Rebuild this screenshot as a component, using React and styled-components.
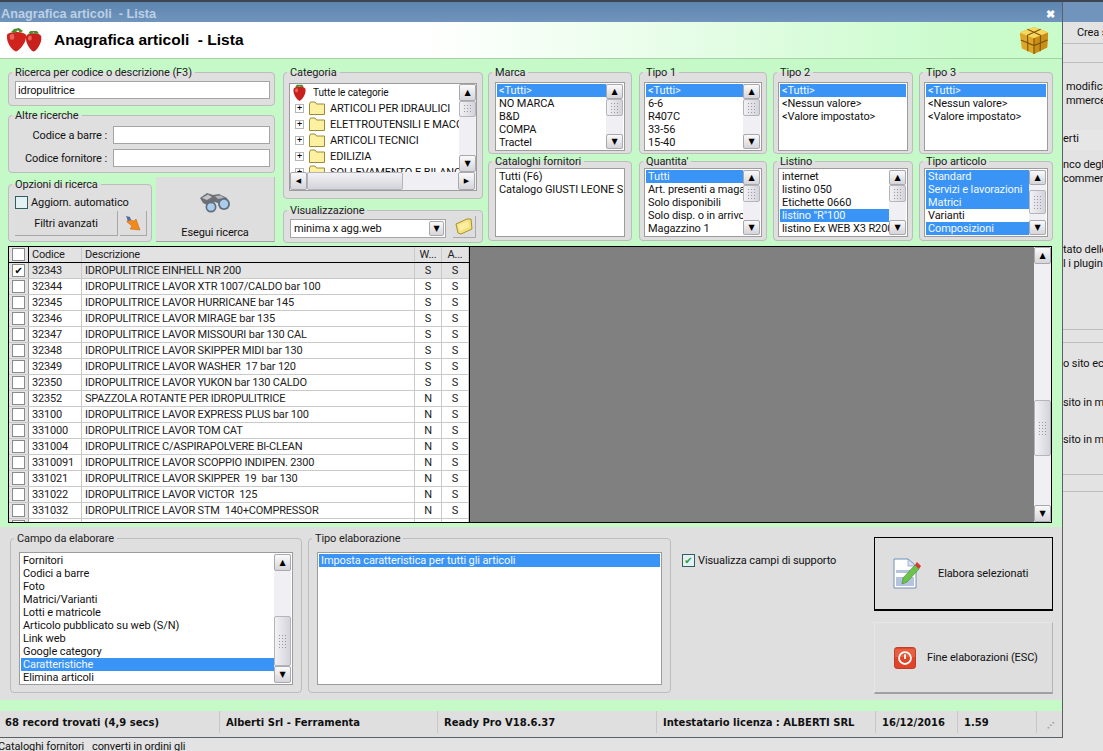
import React from "react";
import styled, { createGlobalStyle } from "styled-components";

const GlobalStyle = createGlobalStyle`
  html, body { margin: 0; padding: 0; background: #e3e3e3; overflow: hidden; }
  body { font-family: Roboto, "Liberation Sans", Arial, sans-serif; font-size: 11px; letter-spacing: -0.1px; color: #111; }
`;

const Berry = ({ x = 0, y = 0, s = 1 }) => (
  <g transform={`translate(${x} ${y}) scale(${s})`}>
    <path d="M1 6 C2 2 14 2 15 6 C16 12 11 19 8 20 C5 19 0 12 1 6Z" fill="#c8201c" />
    <path d="M3 6 C5 4 7 5 6 9 C4 11 2 9 3 6Z" fill="#e8655a" />
    <path d="M3 3 L6 4 L8 2 L10 4 L13 3 L11 1 L8 1 L5 1Z" fill="#4f8a2c" />
  </g>
);

const Strawberries = () => (
  <svg width="37" height="24" viewBox="0 0 37 24">
    <Berry x={19} y={2} s={1.08} />
    <path d="M1 7 C2 3 18 3 20 7 C21 14 14 22 10 23.5 C6 22 0 15 1 7Z" fill="#d0231e" />
    <path d="M4 7 C7 5 9 6 8 11 C5 13 3 11 4 7Z" fill="#e8655a" />
    <path d="M5 4 L9 5 L12 2 L14 5 L17 3 L13 0 L8 1Z" fill="#4f8a2c" />
  </svg>
);

const Cube = () => (
  <svg width="30" height="30" viewBox="0 0 32 32">
    <path d="M16 2 L29 7 Q31 8 31 10 L30 24 L16 31 L3 25 L1 10 Q1 8 3 7Z" fill="#dfa726" />
    <path d="M16 2 L29 7 Q31 8 29 9 L16 14 L3 9 Q1 8 3 7Z" fill="#f7d85e" />
    <path d="M16 14 L31 8 L30 24 L16 31Z" fill="#c98e16" />
    <path d="M9 4.5 L23 11 M23 4.5 L9 11 M9 11 L9.5 28 M23 11 L22.5 28 M2 16 L16 22 L30.5 16 M16 14 V31" stroke="#7d540a" strokeWidth="1.2" fill="none" />
  </svg>
);

const Binoculars = () => (
  <svg width="32" height="21" viewBox="0 0 32 21">
    <path d="M1 6 L8 1 L14 3 L20 2 L28 6 L30 11 L24 13 L16 10 L10 14 L4 11Z" fill="#6f7075" />
    <path d="M3 6 L9 2.5 L13 5 L8 8Z" fill="#c2c5ca" />
    <path d="M16 4 L22 3.5 L25 6 L19 7Z" fill="#b4b7bd" />
    <circle cx="12" cy="15" r="5.5" fill="#5f6f80" />
    <circle cx="12" cy="15" r="3.8" fill="#a9cdea" />
    <circle cx="25" cy="12" r="6" fill="#5f6f80" />
    <circle cx="25" cy="12" r="4.2" fill="#a9cdea" />
  </svg>
);

const FolderIcon = () => (
  <Svg width="16" height="14" viewBox="0 0 16 14">
    <path d="M.5 3 L1.5 1 H6 L7.5 3 H15.5 V13.5 H.5Z" fill="#fdf0a0" stroke="#9c8a3a" />
  </Svg>
);

const OpenFolderIcon = () => (
  <Svg width="18" height="17" viewBox="0 0 18 17">
    <path d="M1 6 L12 1 L16 1 L17 11 L6 16 L3 15Z" fill="#f5e27c" stroke="#a78f35" />
    <path d="M3 7 L13 3 L14 9 L5 13Z" fill="#fbeea0" />
  </Svg>
);

const ArrowIcon = () => (
  <svg width="16" height="16" viewBox="0 0 16 16">
    <path d="M3 4 L9 6 L11 4 L15 15 L5 14 L7 11 L2 7Z" fill="#f08a1d" stroke="#c4600c" strokeWidth=".5" />
    <path d="M1 1 L5 2 L6 5 L3 6Z" fill="#4a6fa8" />
  </svg>
);

const EditIcon = () => (
  <svg width="28" height="32" viewBox="0 0 28 32">
    <path d="M1 1 H15 L23 8 V30 H1Z" fill="#fff" stroke="#6f8fb8" />
    <path d="M15 1 V8 H23Z" fill="#d8e2f0" stroke="#6f8fb8" strokeWidth=".6" />
    <path d="M3 12 H21 V15 H3Z M3 19 H21 V28 H3Z" fill="#b5c3de" />
    <path d="M9 26 L10 20 L22 7 L26 11 L14 24Z" fill="#6cc24a" stroke="#3d8a2a" strokeWidth=".6" />
    <path d="M22 7 L24 4 L28 8 L26 11Z" fill="#d9392e" />
  </svg>
);

const PowerIcon = () => (
  <svg width="22" height="22" viewBox="0 0 24 24">
    <rect x=".5" y=".5" width="23" height="23" rx="3" fill="#df4526" stroke="#b8321d" />
    <path d="M1 2 H23 V11 H1Z" fill="#f07a5c" opacity=".5" />
    <circle cx="12" cy="12" r="6.5" fill="none" stroke="#fff" strokeWidth="2" />
    <path d="M12 8 V13" stroke="#fff" strokeWidth="2" />
  </svg>
);

const Svg = styled.svg`
  flex-shrink: 0;
`;

const Page = styled.div`
  width: 1103px;
  height: 751px;
  display: flex;
  flex-direction: column;
  overflow: hidden;
  background: #e3e3e3;
`;

const TopEdge = styled.div`
  height: 2px;
  background: #3d4650;
`;

const Desk = styled.div`
  flex: 1;
  display: flex;
  min-height: 0;
`;

const Window = styled.div`
  width: 1063px;
  height: 736px;
  flex-shrink: 0;
  display: flex;
  flex-direction: column;
  border-right: 1px solid #5b6066;
  border-bottom: 1px solid #5b6066;
  box-sizing: border-box;
`;

const TitleBar = styled.div`
  height: 20px;
  flex-shrink: 0;
  display: flex;
  align-items: center;
  justify-content: space-between;
  padding: 4px 7px 0 1px;
  box-sizing: border-box;
  background: linear-gradient(#5d85b0, #7094bc);
  color: #bcd0e6;
  font-family: "Liberation Sans", Arial, sans-serif;
  font-size: 12.7px;
  font-weight: bold;
  letter-spacing: 0;
  white-space: pre;
`;

const CloseMark = styled.span`
  color: #fff;
  font-size: 11px;
  font-weight: bold;
`;

const Header = styled.div`
  height: 37px;
  flex-shrink: 0;
  display: flex;
  align-items: center;
  justify-content: space-between;
  padding: 0 13px 0 6px;
  box-sizing: border-box;
  background: linear-gradient(90deg, #fff 0%, #fff 40%, #c9fbcb 92%);
  border-bottom: 1px solid #a9cfa9;
`;

const HeaderTitle = styled.h1`
  flex: 1;
  margin: 0 0 0 11px;
  font-family: "Liberation Sans", Arial, sans-serif;
  font-size: 15.5px;
  font-weight: bold;
  letter-spacing: 0;
  color: #000;
  white-space: pre;
`;

const Body = styled.div`
  flex: 1;
  display: flex;
  flex-direction: column;
  min-height: 0;
  background: #c5fac8;
`;

const Filters = styled.div`
  display: flex;
  height: 184px;
  padding: 8px 0 0 8px;
  flex-shrink: 0;
  box-sizing: border-box;
`;

const Column = styled.div`
  width: ${(p) => p.$w}px;
  margin-left: ${(p) => p.$ml || 0}px;
  display: flex;
  flex-direction: column;
  gap: ${(p) => p.$gap ?? 2}px;
  flex-shrink: 0;
`;

const Group = styled.fieldset`
  margin: ${(p) => p.$mt || 0}px 0 0;
  padding: ${(p) => p.$pt || 0}px ${(p) => p.$pr ?? 4}px 0 ${(p) => p.$pl ?? 4}px;
  width: ${(p) => (p.$w ? `${p.$w}px` : "auto")};
  height: ${(p) => p.$h}px;
  box-sizing: border-box;
  min-width: 0;
  background: ${(p) => (p.$bare ? "transparent" : "#dfdfdf")};
  border: 1px solid #bdbdbd;
  border-radius: 4px;
  flex-shrink: 0;

  legend {
    padding: 0 3px;
    margin-left: ${(p) => 3 - (p.$pl ?? 4)}px;
    font-size: 11px;
    line-height: 11px;
    color: #222;
  }
`;

const TextInput = styled.div`
  flex: ${(p) => (p.$w ? "none" : 1)};
  width: ${(p) => (p.$w ? `${p.$w}px` : "auto")};
  height: 18px;
  line-height: 17px;
  padding-left: 2px;
  background: #fff;
  border: 1px solid #a5a5a5;
  box-sizing: border-box;
`;

const LabelRow = styled.div`
  display: flex;
  align-items: center;
  justify-content: flex-end;
  gap: 6px;
  height: 18px;
  margin-bottom: 5px;
`;

const SplitRow = styled.div`
  display: flex;
  gap: ${(p) => p.$gap ?? 4}px;
`;

const CheckLine = styled.label`
  display: flex;
  align-items: center;
  gap: 3px;
  height: 14px;
  margin-bottom: 2px;
  white-space: nowrap;
`;

const Box = styled.span`
  width: 13px;
  height: 13px;
  flex-shrink: 0;
  box-sizing: border-box;
  background: ${(p) => (p.$soft ? "#e4f0f4" : "#fff")};
  border: 1px solid ${(p) => (p.$soft ? "#2f5f5f" : "#8a8a8a")};
  display: inline-flex;
  align-items: center;
  justify-content: center;
  color: ${(p) => (p.$soft ? "#1f9e3a" : "#000")};
  font-family: "DejaVu Sans", sans-serif;
  font-size: 10px;
  line-height: 11px;
  font-weight: bold;
`;

const FlatButton = styled.div`
  height: ${(p) => p.$h || 25}px;
  flex: ${(p) => (p.$w ? "none" : 1)};
  width: ${(p) => (p.$w ? `${p.$w}px` : "auto")};
  box-sizing: border-box;
  display: flex;
  align-items: center;
  justify-content: center;
  background: #dedede;
  border-bottom: 1px solid #a8a8a8;
  border-right: 1px solid #a8a8a8;
`;

const SearchButton = styled.div`
  height: 65px;
  box-sizing: border-box;
  flex: 1;
  display: flex;
  flex-direction: column;
  align-items: center;
  background: #dedede;
  border-bottom: 1px solid #a0a0a0;
  border-right: 1px solid #c0c0c0;
  padding-top: 15px;
  gap: 13px;
`;

const ListBox = styled.div`
  height: ${(p) => p.$h}px;
  box-sizing: border-box;
  background: #fff;
  border: 1px solid #9c9c9c;
  display: flex;
  overflow: hidden;
  padding: 1px;
`;

const Items = styled.div`
  flex: 1;
  min-width: 0;
  overflow: hidden;
`;

const Item = styled.div`
  height: 13px;
  line-height: 13px;
  padding-left: 2px;
  white-space: nowrap;
  overflow: hidden;
  background: ${(p) => (p.$on ? "#3a94f5" : "transparent")};
  color: ${(p) => (p.$on ? "#f2f8ff" : "#111")};
`;

const VBar = styled.div`
  width: 17px;
  height: ${(p) => (p.$h ? `${p.$h}px` : "auto")};
  flex-shrink: 0;
  display: flex;
  flex-direction: column;
  background: #f0f0f4;
`;

const ScrollBtn = styled.div`
  height: ${(p) => p.$h || 17}px;
  flex-shrink: 0;
  box-sizing: border-box;
  background: linear-gradient(#fafafa, #d5d5da);
  border: 1px solid #a8a8ae;
  border-radius: 2px;
  display: flex;
  align-items: center;
  justify-content: center;
  font-family: "DejaVu Sans", sans-serif;
  font-size: 8px;
  color: #000;
`;

const Thumb = styled.div`
  height: ${(p) => p.$h}px;
  margin-top: ${(p) => p.$top || 0}px;
  flex-shrink: 0;
  box-sizing: border-box;
  background: linear-gradient(90deg, #f2f2f5, #d3d3da);
  border: 1px solid #b4b4bb;
  border-radius: 2px;
  display: flex;
  align-items: center;
  justify-content: center;

  &::after {
    content: "";
    width: 9px;
    height: ${(p) => Math.min(p.$h - 6, 15)}px;
    background: radial-gradient(circle, #9a9aa4 0.7px, transparent 0.8px) 0 0 / 3px 3px;
  }
`;

const Spacer = styled.div`
  flex: 1;
`;

const Scroll = ({ thumb = 17, top = 0, btn = 15 }) => (
  <VBar>
    <ScrollBtn $h={btn}>▲</ScrollBtn>
    <Thumb $h={thumb} $top={top} />
    <Spacer />
    <ScrollBtn $h={btn}>▼</ScrollBtn>
  </VBar>
);

const TreeBox = styled.div`
  height: 108px;
  box-sizing: border-box;
  background: #fff;
  border: 1px solid #9c9c9c;
  display: flex;
  flex-wrap: wrap;
  overflow: hidden;
`;

const TreeItems = styled.div`
  width: 169px;
  height: 88px;
  overflow: hidden;
  padding-left: 2px;
  box-sizing: border-box;
`;

const TreeRoot = styled.div`
  height: 16px;
  display: flex;
  align-items: center;
  gap: 6px;
  font-size: 10px;
`;

const TreeRow = styled.div`
  height: 16px;
  display: flex;
  align-items: center;
  gap: 5px;
  margin-left: 3px;
  white-space: nowrap;
`;

const Plus = styled.span`
  width: 9px;
  height: 9px;
  flex-shrink: 0;
  box-sizing: border-box;
  border: 1px solid #b5b5b5;
  display: inline-flex;
  align-items: center;
  justify-content: center;
  font-size: 9px;
  line-height: 7px;
  color: #000;
`;

const HBar = styled.div`
  width: 100%;
  height: 18px;
  display: flex;
  background: #f0f0f4;
  padding-right: 1px;
  box-sizing: border-box;
`;

const HThumb = styled.div`
  width: 96px;
  background: linear-gradient(#f2f2f5, #d3d3da);
  border: 1px solid #b4b4bb;
  border-radius: 2px;
  box-sizing: border-box;
`;

const HBtn = styled(ScrollBtn)`
  width: 17px;
  height: 18px;
  font-size: 7px;
`;

const ComboRow = styled.div`
  display: flex;
  align-items: flex-end;
  gap: 7px;
`;

const Combo = styled.div`
  flex: 1;
  height: 19px;
  box-sizing: border-box;
  background: #fff;
  border: 1px solid #a5a5a5;
  display: flex;
  align-items: center;
  justify-content: space-between;
  padding: 0 1px 0 3px;
`;

const ComboArrow = styled(ScrollBtn)`
  width: 15px;
  height: 15px;
`;

const GridArea = styled.div`
  height: 277px;
  margin: 3px 10px 0 8px;
  display: flex;
  flex-shrink: 0;
  border: 1px solid #000;
  background: #808080;
  box-sizing: border-box;
`;

const Table = styled.div`
  width: 461px;
  flex-shrink: 0;
  background: #fff;
  border-right: 1px solid #000;
  overflow: hidden;
  box-sizing: border-box;
`;

const GridRow = styled.div`
  display: grid;
  grid-template-columns: 20px 53px 333px 27px 27px;
  height: 16px;
  box-sizing: border-box;
  border-bottom: 1px solid ${(p) => (p.$head ? "#000" : "#c9c9c9")};
  background: ${(p) => (p.$head ? "#e2e2e2" : p.$sel ? "#e4e4e4" : "#fff")};
`;

const Cell = styled.div`
  padding-left: ${(p) => (p.$center ? 0 : 3)}px;
  text-align: ${(p) => (p.$center ? "center" : "left")};
  line-height: 15px;
  letter-spacing: -0.2px;
  white-space: pre;
  overflow: hidden;
  border-right: 1px solid #c9c9c9;
  color: #222;
`;

const CheckCell = styled(Cell)`
  display: flex;
  align-items: center;
  justify-content: center;
  padding: 0;
  background: #e2e2e2;
  border-right: 1px solid ${(p) => (p.$head ? "#000" : "#9a9a9a")};
`;

const GridFill = styled.div`
  flex: 1;
`;

const BottomPanel = styled.div`
  height: 173px;
  margin-top: 4px;
  flex-shrink: 0;
  box-sizing: border-box;
  background: #dfdfdf;
  display: flex;
  padding: 6px 9px 0 10px;
  gap: 6px;
`;

const CheckArea = styled.div`
  width: 191px;
  padding: 20px 0 0 5px;
  box-sizing: border-box;
  flex-shrink: 0;
`;

const ActionColumn = styled.div`
  flex: 1;
  display: flex;
  flex-direction: column;
  gap: 11px;
  margin-top: 4px;
`;

const ActionButton = styled.div`
  height: ${(p) => p.$h}px;
  box-sizing: border-box;
  display: flex;
  align-items: center;
  background: #dedede;
  border: 1px solid ${(p) => (p.$focus ? "#000" : "#e6e6e6")};
  border-bottom: ${(p) => (p.$focus ? "2px solid #000" : "2px solid #a0a0a0")};
  border-right: 1px solid ${(p) => (p.$focus ? "#000" : "#b5b5b5")};
  padding-left: ${(p) => p.$pad}px;
  gap: ${(p) => p.$gap}px;
`;

const Status = styled.div`
  flex: 1;
  margin-top: 11px;
  display: flex;
  gap: 2px;
  padding: 0 0 0 1px;
  background: #dfdfdf;
  font-family: "DejaVu Sans", sans-serif;
  font-weight: bold;
  font-size: 10px;
  letter-spacing: 0;
  box-sizing: border-box;
`;

const StatusCell = styled.div`
  width: ${(p) => p.$w}px;
  height: 22px;
  flex-shrink: 0;
  padding-left: 4px;
  box-sizing: border-box;
  line-height: 24px;
  border-right: 1px solid #c8c8c8;
  white-space: nowrap;
  overflow: hidden;
`;

const Grip = styled.div`
  margin: 10px 0 0 8px;
  font-size: 8px;
  color: #9a9a9a;
`;

const Behind = styled.div`
  flex: 1;
  min-width: 0;
  display: flex;
  flex-direction: column;
  overflow: hidden;
  white-space: nowrap;
`;

const BehindBand = styled.div`
  height: ${(p) => p.$h}px;
  flex-shrink: 0;
  background: ${(p) => p.$bg || "transparent"};
  padding: ${(p) => p.$pt || 0}px 0 0 ${(p) => p.$pad || 0}px;
  line-height: ${(p) => p.$lh || 14}px;
  border-bottom: ${(p) => (p.$line ? "1px solid #bdbdbd" : "none")};
  box-sizing: border-box;
`;

const Footer = styled.div`
  height: 13px;
  flex-shrink: 0;
  line-height: 18px;
  margin-left: -2px;
  white-space: pre;
  overflow: hidden;
`;

const marca = ["<Tutti>", "NO MARCA", "B&D", "COMPA", "Tractel"];
const tipo1 = ["<Tutti>", "6-6", "R407C", "33-56", "15-40"];
const tipoBase = ["<Tutti>", "<Nessun valore>", "<Valore impostato>"];
const quantita = ["Tutti", "Art. presenti a magazzino", "Solo disponibili", "Solo disp. o in arrivo", "Magazzino 1"];
const listino = ["internet", "listino 050", "Etichette 0660", 'listino "R"100', "listino Ex WEB X3 R200"];
const tipoArt = ["Standard", "Servizi e lavorazioni", "Matrici", "Varianti", "Composizioni"];
const campo = ["Fornitori", "Codici a barre", "Foto", "Matrici/Varianti", "Lotti e matricole", "Articolo pubblicato su web (S/N)", "Link web", "Google category", "Caratteristiche", "Elimina articoli"];
const categorie = ["ARTICOLI PER IDRAULICI", "ELETTROUTENSILI E MACCHINE", "ARTICOLI TECNICI", "EDILIZIA", "SOLLEVAMENTO E BILANCE"];

const rows = [
  ["32343", "IDROPULITRICE EINHELL NR 200", "S"],
  ["32344", "IDROPULITRICE LAVOR XTR 1007/CALDO bar 100", "S"],
  ["32345", "IDROPULITRICE LAVOR HURRICANE bar 145", "S"],
  ["32346", "IDROPULITRICE LAVOR MIRAGE bar 135", "S"],
  ["32347", "IDROPULITRICE LAVOR MISSOURI bar 130 CAL", "S"],
  ["32348", "IDROPULITRICE LAVOR SKIPPER MIDI bar 130", "S"],
  ["32349", "IDROPULITRICE LAVOR WASHER  17 bar 120", "S"],
  ["32350", "IDROPULITRICE LAVOR YUKON bar 130 CALDO", "S"],
  ["32352", "SPAZZOLA ROTANTE PER IDROPULITRICE", "N"],
  ["33100", "IDROPULITRICE LAVOR EXPRESS PLUS bar 100", "N"],
  ["331000", "IDROPULITRICE LAVOR TOM CAT", "N"],
  ["331004", "IDROPULITRICE C/ASPIRAPOLVERE BI-CLEAN", "N"],
  ["3310091", "IDROPULITRICE LAVOR SCOPPIO INDIPEN. 2300", "N"],
  ["331021", "IDROPULITRICE LAVOR SKIPPER  19  bar 130", "N"],
  ["331022", "IDROPULITRICE LAVOR VICTOR  125", "N"],
  ["331032", "IDROPULITRICE LAVOR STM  140+COMPRESSOR", "N"],
];

const List = ({ items, on = [0], h = 69, thumb, top, btn, scroll = true }) => (
  <ListBox $h={h}>
    <Items>
      {items.map((t, i) => (
        <Item key={t} $on={on.includes(i)}>
          {t}
        </Item>
      ))}
    </Items>
    {scroll && <Scroll thumb={thumb} top={top} btn={btn} />}
  </ListBox>
);

export default function App() {
  return (
    <Page>
      <GlobalStyle />
      <TopEdge />
      <Desk>
        <Window>
          <TitleBar>
            <span>Anagrafica articoli  - Lista</span>
            <CloseMark>✖</CloseMark>
          </TitleBar>
          <Header>
            <Strawberries />
            <HeaderTitle>Anagrafica articoli  - Lista</HeaderTitle>
            <Cube />
          </Header>
          <Body>
            <Filters>
              <Column $w={267} $gap={4}>
                <Group $h={39} $pt={3} $pl={6}>
                  <legend>Ricerca per codice o descrizione (F3)</legend>
                  <SplitRow>
                    <TextInput>idropulitrice</TextInput>
                  </SplitRow>
                </Group>
                <Group $h={63} $pt={5} $pl={6}>
                  <legend>Altre ricerche</legend>
                  <LabelRow>
                    Codice a barre :<TextInput $w={157} />
                  </LabelRow>
                  <LabelRow>
                    Codice fornitore :<TextInput $w={157} />
                  </LabelRow>
                </Group>
                <SplitRow>
                  <Group $w={144} $h={63} $mt={2} $pt={5} $pl={6}>
                    <legend>Opzioni di ricerca</legend>
                    <CheckLine>
                      <Box $soft />
                      Aggiorn. automatico
                    </CheckLine>
                    <SplitRow $gap={2}>
                      <FlatButton>Filtri avanzati</FlatButton>
                      <FlatButton $w={27}>
                        <ArrowIcon />
                      </FlatButton>
                    </SplitRow>
                  </Group>
                  <SearchButton>
                    <Binoculars />
                    Esegui ricerca
                  </SearchButton>
                </SplitRow>
              </Column>
              <Column $w={200} $ml={8} $gap={6}>
                <Group $h={132} $pt={5} $pl={5} $pr={5}>
                  <legend>Categoria</legend>
                  <TreeBox>
                    <TreeItems>
                      <TreeRoot>
                        <Svg width="15" height="17" viewBox="0 0 16 20">
                          <Berry />
                        </Svg>
                        Tutte le categorie
                      </TreeRoot>
                      {categorie.map((c) => (
                        <TreeRow key={c}>
                          <Plus>+</Plus>
                          <FolderIcon />
                          {c}
                        </TreeRow>
                      ))}
                    </TreeItems>
                    <VBar $h={88}>
                      <ScrollBtn>▲</ScrollBtn>
                      <Thumb $h={16} />
                      <Spacer />
                      <ScrollBtn>▼</ScrollBtn>
                    </VBar>
                    <HBar>
                      <HBtn>◀</HBtn>
                      <HThumb />
                      <Spacer />
                      <HBtn>▶</HBtn>
                    </HBar>
                  </TreeBox>
                </Group>
                <Group $h={38} $pl={6} $pr={6}>
                  <legend>Visualizzazione</legend>
                  <ComboRow>
                    <Combo>
                      minima x agg.web
                      <ComboArrow>▼</ComboArrow>
                    </Combo>
                    <FlatButton $w={23} $h={22}>
                      <OpenFolderIcon />
                    </FlatButton>
                  </ComboRow>
                </Group>
              </Column>
              <Column $w={144} $ml={5}>
                <Group $h={87} $pt={4} $pl={6} $pr={6}>
                  <legend>Marca</legend>
                  <List items={marca} />
                </Group>
                <Group $h={85} $pt={1} $pl={6} $pr={6}>
                  <legend>Cataloghi fornitori</legend>
                  <List items={["Tutti (F6)", "Catalogo GIUSTI LEONE SRL"]} scroll={false} on={[]} />
                </Group>
              </Column>
              <Column $w={128} $ml={7}>
                <Group $h={87} $pt={4}>
                  <legend>Tipo 1</legend>
                  <List items={tipo1} />
                </Group>
                <Group $h={85} $pt={1}>
                  <legend>Quantita'</legend>
                  <List items={quantita} />
                </Group>
              </Column>
              <Column $w={140} $ml={6}>
                <Group $h={87} $pt={4}>
                  <legend>Tipo 2</legend>
                  <List items={tipoBase} scroll={false} />
                </Group>
                <Group $h={85} $pt={1}>
                  <legend>Listino</legend>
                  <List items={listino} on={[3]} />
                </Group>
              </Column>
              <Column $w={134} $ml={6}>
                <Group $h={87} $pt={4}>
                  <legend>Tipo 3</legend>
                  <List items={tipoBase} scroll={false} />
                </Group>
                <Group $h={85} $pt={1}>
                  <legend>Tipo articolo</legend>
                  <List items={tipoArt} on={[0, 1, 2, 4]} thumb={24} top={5} />
                </Group>
              </Column>
            </Filters>
            <GridArea>
              <Table>
                <GridRow $head>
                  <CheckCell $head>
                    <Box />
                  </CheckCell>
                  <Cell>Codice</Cell>
                  <Cell>Descrizione</Cell>
                  <Cell $center>W...</Cell>
                  <Cell $center>A...</Cell>
                </GridRow>
                {rows.map(([code, name, web], i) => (
                  <GridRow key={code} $sel={i === 0}>
                    <CheckCell>
                      <Box>{i === 0 ? "✔" : ""}</Box>
                    </CheckCell>
                    <Cell>{code}</Cell>
                    <Cell>{name}</Cell>
                    <Cell $center>{web}</Cell>
                    <Cell $center>S</Cell>
                  </GridRow>
                ))}
                <GridRow>
                  <CheckCell>
                    <Box />
                  </CheckCell>
                  <Cell />
                  <Cell />
                  <Cell />
                  <Cell />
                </GridRow>
              </Table>
              <GridFill />
              <VBar>
                <ScrollBtn>▲</ScrollBtn>
                <Thumb $h={56} $top={136} />
                <Spacer />
                <ScrollBtn>▼</ScrollBtn>
              </VBar>
            </GridArea>
            <BottomPanel>
              <Group $w={292} $h={160} $pt={8} $pl={8} $pr={8} $bare>
                <legend>Campo da elaborare</legend>
                <List items={campo} on={[8]} h={133} thumb={50} top={45} btn={17} />
              </Group>
              <Group $w={363} $h={160} $pt={8} $pl={8} $pr={8} $bare>
                <legend>Tipo elaborazione</legend>
                <List items={["Imposta caratteristica per tutti gli articoli"]} h={133} scroll={false} />
              </Group>
              <CheckArea>
                <CheckLine>
                  <Box $soft>✔</Box>
                  Visualizza campi di supporto
                </CheckLine>
              </CheckArea>
              <ActionColumn>
                <ActionButton $focus $h={74} $pad={18} $gap={17}>
                  <EditIcon />
                  Elabora selezionati
                </ActionButton>
                <ActionButton $h={72} $pad={19} $gap={11}>
                  <PowerIcon />
                  Fine elaborazioni (ESC)
                </ActionButton>
              </ActionColumn>
            </BottomPanel>
            <Status>
              <StatusCell $w={219}>68 record trovati (4,9 secs)</StatusCell>
              <StatusCell $w={216}>Alberti Srl - Ferramenta</StatusCell>
              <StatusCell $w={217}>Ready Pro V18.6.37</StatusCell>
              <StatusCell $w={217}>Intestatario licenza : ALBERTI SRL</StatusCell>
              <StatusCell $w={80}>16/12/2016</StatusCell>
              <StatusCell $w={77}>1.59</StatusCell>
              <Grip>⋰</Grip>
            </Status>
          </Body>
        </Window>
        <Behind>
          <BehindBand $h={20} $bg="#7094bc" />
          <BehindBand $h={22} $pad={14} $lh={22} $line>Crea s</BehindBand>
          <BehindBand $h={19} $line />
          <BehindBand $h={67} $pad={3} $pt={17}>
            modifica
            <br />
            mmerce
          </BehindBand>
          <BehindBand $h={20} $lh={18} $bg="#e6e6e6">erti</BehindBand>
          <BehindBand $h={80} $pt={8}>
            nco degl
            <br />
            commerc
          </BehindBand>
          <BehindBand $h={100} $pt={13} $line>
            tato delle
            <br />
            l i plugin
          </BehindBand>
          <BehindBand $h={13} $line />
          <BehindBand $h={37} $pt={14}>o sito ec</BehindBand>
          <BehindBand $h={37} $pt={16}>sito in mo</BehindBand>
          <BehindBand $h={58} $pt={16} $line>sito in mo</BehindBand>
          <BehindBand $h={17} $line />
        </Behind>
      </Desk>
      <Footer>Cataloghi fornitori   converti in ordini gli</Footer>
    </Page>
  );
}
